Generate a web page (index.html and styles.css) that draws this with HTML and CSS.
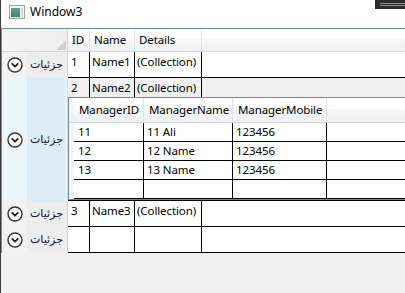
FILE: index.html
```html
<!DOCTYPE html>
<html lang="fa">
<head>
    <meta charset="UTF-8">
    <meta name="viewport" content="width=device-width, initial-scale=1.0">
    <title>Window3</title>
    <link rel="stylesheet" href="styles.css">
</head>
<body>
    <div class="window">
        <div class="titlebar">
            <svg class="app-icon" width="16" height="14" viewBox="0 0 16 14">
                <defs>
                    <linearGradient id="appFill" x1="0" y1="0" x2="0" y2="1">
                        <stop offset="0" stop-color="#5aa0a8"/>
                        <stop offset="1" stop-color="#3f8a4e"/>
                    </linearGradient>
                </defs>
                <rect x="0.5" y="0.5" width="15" height="13" fill="#f3f3f3" stroke="#a0a0a0"/>
                <rect x="2" y="3" width="9" height="9" fill="url(#appFill)"/>
                <rect x="12" y="3" width="2" height="9" fill="#d4d4d4"/>
            </svg>
            <span class="title">Window3</span>
        </div>
        <div class="back-window"></div>

        <div class="grid">
            <div class="row header-row">
                <div class="select-all">
                    <svg width="10" height="10" viewBox="0 0 10 10"><polygon points="10,0 10,10 0,10" fill="#d0d0d0"/></svg>
                </div>
                <div class="col-header col-id">ID</div>
                <div class="col-header col-name">Name</div>
                <div class="col-header col-details">Details</div>
                <div class="col-header col-fill"></div>
            </div>

            <div class="row item">
                <div class="row-header">
                    <button class="details-btn">
                        <svg class="chevron" width="16" height="16" viewBox="0 0 16 16"><circle cx="8" cy="8" r="7" fill="#fff" stroke="#333" stroke-width="1.4"/><path d="M5.2 6.8 L8 9.6 L10.8 6.8" fill="none" stroke="#222" stroke-width="1.8" stroke-linecap="round" stroke-linejoin="round"/></svg>
                        <span class="btn-text" dir="rtl">جزئیات</span>
                    </button>
                </div>
                <div class="row-body">
                    <div class="cells">
                        <div class="cell col-id">1</div>
                        <div class="cell col-name">Name1</div>
                        <div class="cell col-details">(Collection)</div>
                        <div class="cell col-fill"></div>
                    </div>
                </div>
            </div>

            <div class="row item selected">
                <div class="row-header">
                    <button class="details-btn">
                        <svg class="chevron" width="16" height="16" viewBox="0 0 16 16"><circle cx="8" cy="8" r="7" fill="#fff" stroke="#333" stroke-width="1.4"/><path d="M5.2 6.8 L8 9.6 L10.8 6.8" fill="none" stroke="#222" stroke-width="1.8" stroke-linecap="round" stroke-linejoin="round"/></svg>
                        <span class="btn-text" dir="rtl">جزئیات</span>
                    </button>
                </div>
                <div class="row-body">
                    <div class="cells">
                        <div class="cell col-id">2</div>
                        <div class="cell col-name">Name2</div>
                        <div class="cell col-details">(Collection)</div>
                        <div class="cell col-fill"></div>
                    </div>
                    <div class="details">
                        <div class="inner-row inner-header">
                            <div class="inner-corner"></div>
                            <div class="inner-col-header col-mid">ManagerID</div>
                            <div class="inner-col-header col-mname">ManagerName</div>
                            <div class="inner-col-header col-mmobile">ManagerMobile</div>
                            <div class="inner-col-header col-fill"></div>
                        </div>
                        <div class="inner-row">
                            <div class="inner-rowhead"></div>
                            <div class="inner-cells">
                                <div class="inner-cell col-mid">11</div>
                                <div class="inner-cell col-mname">11 Ali</div>
                                <div class="inner-cell col-mmobile">123456</div>
                                <div class="inner-cell col-fill"></div>
                            </div>
                        </div>
                        <div class="inner-row">
                            <div class="inner-rowhead"></div>
                            <div class="inner-cells">
                                <div class="inner-cell col-mid">12</div>
                                <div class="inner-cell col-mname">12 Name</div>
                                <div class="inner-cell col-mmobile">123456</div>
                                <div class="inner-cell col-fill"></div>
                            </div>
                        </div>
                        <div class="inner-row">
                            <div class="inner-rowhead"></div>
                            <div class="inner-cells">
                                <div class="inner-cell col-mid">13</div>
                                <div class="inner-cell col-mname">13 Name</div>
                                <div class="inner-cell col-mmobile">123456</div>
                                <div class="inner-cell col-fill"></div>
                            </div>
                        </div>
                        <div class="inner-row">
                            <div class="inner-rowhead"></div>
                            <div class="inner-cells">
                                <div class="inner-cell col-mid"></div>
                                <div class="inner-cell col-mname"></div>
                                <div class="inner-cell col-mmobile"></div>
                                <div class="inner-cell col-fill"></div>
                            </div>
                        </div>
                    </div>
                </div>
            </div>

            <div class="row item">
                <div class="row-header">
                    <button class="details-btn">
                        <svg class="chevron" width="16" height="16" viewBox="0 0 16 16"><circle cx="8" cy="8" r="7" fill="#fff" stroke="#333" stroke-width="1.4"/><path d="M5.2 6.8 L8 9.6 L10.8 6.8" fill="none" stroke="#222" stroke-width="1.8" stroke-linecap="round" stroke-linejoin="round"/></svg>
                        <span class="btn-text" dir="rtl">جزئیات</span>
                    </button>
                </div>
                <div class="row-body">
                    <div class="cells">
                        <div class="cell col-id">3</div>
                        <div class="cell col-name">Name3</div>
                        <div class="cell col-details">(Collection)</div>
                        <div class="cell col-fill"></div>
                    </div>
                </div>
            </div>

            <div class="row item">
                <div class="row-header">
                    <button class="details-btn">
                        <svg class="chevron" width="16" height="16" viewBox="0 0 16 16"><circle cx="8" cy="8" r="7" fill="#fff" stroke="#333" stroke-width="1.4"/><path d="M5.2 6.8 L8 9.6 L10.8 6.8" fill="none" stroke="#222" stroke-width="1.8" stroke-linecap="round" stroke-linejoin="round"/></svg>
                        <span class="btn-text" dir="rtl">جزئیات</span>
                    </button>
                </div>
                <div class="row-body">
                    <div class="cells">
                        <div class="cell col-id"></div>
                        <div class="cell col-name"></div>
                        <div class="cell col-details"></div>
                        <div class="cell col-fill"></div>
                    </div>
                </div>
            </div>
        </div>
    </div>
</body>
</html>
```

FILE: styles.css
```css
* {
    margin: 0;
    padding: 0;
    box-sizing: border-box;
}

:root {
    --grid-border: #688caf;
    --header-line: #d5d5d5;
    --gridline: #000;
}

body {
    width: 405px;
    height: 293px;
    overflow: hidden;
    background-color: #f0f0f0;
    font-family: 'Noto Sans', sans-serif;
    font-size: 11.5px;
    letter-spacing: -0.1px;
    color: #000;
}

.window {
    position: relative;
    height: 293px;
    border-left: 1px solid #3a3a3a;
}

.titlebar {
    height: 28px;
    background-color: #fff;
    display: flex;
    align-items: center;
    gap: 5px;
    padding: 0 0 4px 8px;
}

.title {
    font-size: 12px;
    letter-spacing: 0;
    line-height: 16px;
}

/* corner of another window peeking over the top right */
.back-window {
    position: absolute;
    top: 0;
    right: 0;
    width: 30px;
    height: 9px;
    background-color: #2b2b2b;
}

.back-window::before,
.back-window::after {
    content: '';
    position: absolute;
    left: 5px;
    right: 0;
    height: 1px;
    background-color: #8c8c8c;
}

.back-window::before {
    top: 3px;
}

.back-window::after {
    top: 5px;
}

.grid {
    border-top: 1px solid var(--grid-border);
    border-left: 1px solid var(--grid-border);
}

.row {
    display: flex;
}

.header-row {
    height: 23px;
}

.select-all {
    width: 66px;
    background: linear-gradient(to right, #f5f5f5, #eeeeee);
    border-right: 1px solid var(--header-line);
    border-bottom: 1px solid var(--header-line);
    display: flex;
    align-items: flex-end;
    justify-content: flex-end;
    padding: 0 1px 1px 0;
}

.col-header {
    background: linear-gradient(#fff 0, #fff 45%, #f6f7f9 46%, #eef0f2 100%);
    border-right: 1px solid #e2e3ea;
    border-bottom: 1px solid var(--header-line);
    padding-left: 4px;
    display: flex;
    align-items: center;
    line-height: 16px;
}

.col-id {
    width: 22px;
}

.col-name {
    width: 45px;
}

.col-details {
    width: 67px;
}

.col-fill {
    flex: 1;
}

.col-header.col-fill {
    border-right: none;
}

.row-header {
    width: 66px;
    flex-shrink: 0;
    overflow: hidden;
    background: linear-gradient(to right, #f2f2f2 0, #f2f2f2 39%, #ededed 39%, #ededed 100%);
    border-right: 1px solid var(--header-line);
    display: flex;
    align-items: center;
    padding-left: 5px;
}

.selected .row-header {
    background: linear-gradient(to right, #ebf5fc 0, #ebf5fc 39%, #dbedf9 39%, #dbedf9 97%, #e8f3fb 97%);
    border-right-color: #c9e0f2;
}

.details-btn {
    display: flex;
    align-items: center;
    gap: 7px;
    background: none;
    border: none;
    font-family: 'DejaVu Sans', sans-serif;
    font-size: 11px;
    letter-spacing: 0;
    color: #101030;
}

.chevron {
    display: block;
    flex-shrink: 0;
}

.btn-text {
    line-height: 16px;
    white-space: nowrap;
}

.row-body {
    flex: 1;
    border-bottom: 1px solid var(--gridline);
    background-color: #fff;
}

.cells {
    display: flex;
    height: 25px;
}

.selected .cells {
    height: 19px;
    background-color: #f0f0f0;
}

.cell {
    border-right: 1px solid var(--gridline);
    padding: 2px 0 0 2px;
    line-height: 16px;
    white-space: nowrap;
}

.cell.col-id {
    padding-left: 3px;
}

.cell.col-fill {
    border-right: none;
}

/* nested grid inside the row details */
.details {
    border: 1px solid var(--grid-border);
    border-right: none;
    background-color: #fff;
}

.inner-row {
    display: flex;
}

.inner-header {
    height: 25px;
}

.inner-corner {
    width: 5px;
    background: linear-gradient(#fafafa, #efefef);
    border-bottom: 1px solid var(--header-line);
}

.inner-col-header {
    background: linear-gradient(#fff 0, #fff 45%, #f6f7f9 46%, #eef0f2 100%);
    border-right: 1px solid #e2e3ea;
    border-bottom: 1px solid var(--header-line);
    padding-left: 5px;
    display: flex;
    align-items: center;
    line-height: 16px;
    white-space: nowrap;
}

.inner-col-header.col-fill {
    border-right: none;
}

.col-mid {
    width: 70px;
}

.col-mname {
    width: 89px;
}

.col-mmobile {
    width: 94px;
}

.inner-rowhead {
    width: 5px;
    height: 19px;
    background-color: #f5f5f5;
}

.inner-cells {
    flex: 1;
    display: flex;
    height: 19px;
    border-bottom: 1px solid var(--gridline);
}

.inner-cell {
    border-right: 1px solid var(--gridline);
    padding: 1px 0 0 4px;
    line-height: 16px;
    white-space: nowrap;
}

.inner-cell.col-mname,
.inner-cell.col-mmobile {
    padding-left: 3px;
}

.inner-cell.col-fill {
    border-right: none;
}
```
